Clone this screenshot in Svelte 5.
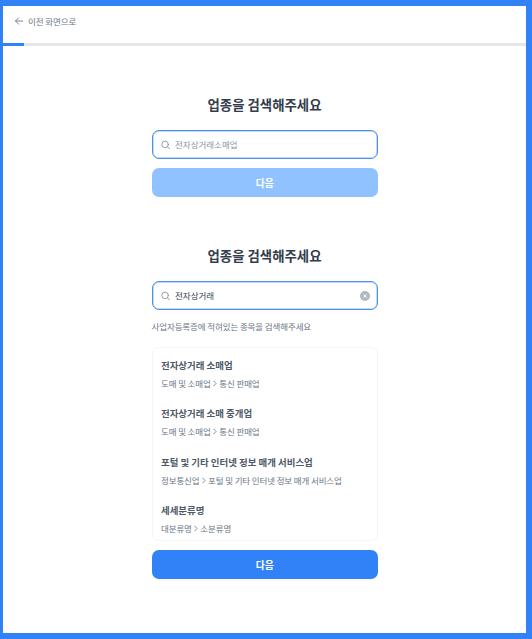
<script>
  const results = [
    { name: '전자상거래 소매업', parent: '도매 및 소매업', child: '통신 판매업' },
    { name: '전자상거래 소매 중개업', parent: '도매 및 소매업', child: '통신 판매업' },
    { name: '포털 및 기타 인터넷 정보 매개 서비스업', parent: '정보통신업', child: '포털 및 기타 인터넷 정보 매개 서비스업' },
    { name: '세세분류명', parent: '대분류명', child: '소분류명' }
  ];
  const progress = 4;
</script>

{#snippet searchIcon()}
  <svg class="search" viewBox="0 0 10 10" aria-hidden="true">
    <circle cx="4.1" cy="4.4" r="3.3" />
    <path d="M6.5 6.8 8.5 8.8" />
  </svg>
{/snippet}

<div class="frame">
  <div class="page">
    <header>
      <svg class="back" viewBox="0 0 8 8" aria-hidden="true">
        <path d="M7.6 4H.7M3.7.8.5 4l3.2 3.2" />
      </svg>
      <span>이전 화면으로</span>
    </header>
    <div class="track"><div class="bar" style="width: {progress}%"></div></div>

    <main>
      <section>
        <h2>업종을 검색해주세요</h2>
        <div class="field">
          {@render searchIcon()}
          <span class="placeholder">전자상거래소매업</span>
        </div>
        <button class="disabled">다음</button>
      </section>

      <section class="second">
        <h2>업종을 검색해주세요</h2>
        <div class="field">
          {@render searchIcon()}
          <span class="value">전자상거래</span>
          <svg class="clear" viewBox="0 0 10 10" aria-hidden="true">
            <circle cx="5" cy="5" r="5" />
            <path d="m3.7 3.7 2.6 2.6m0-2.6-2.6 2.6" />
          </svg>
        </div>
        <p class="help">사업자등록증에 적혀있는 종목을 검색해주세요</p>
        <ul>
          {#each results as item}
            <li>
              <strong>{item.name}</strong>
              <div class="path">
                <span>{item.parent}</span>
                <svg viewBox="0 0 4 7" aria-hidden="true"><path d="m.7 1.1 2.3 2.4L.7 5.9" /></svg>
                <span>{item.child}</span>
              </div>
            </li>
          {/each}
        </ul>
        <button>다음</button>
      </section>
    </main>
  </div>
</div>

<style>
  :global(body) { margin: 0; }
  .frame {
    box-sizing: border-box;
    width: 532px;
    height: 639px;
    padding: 6px 6px 6px 3px;
    background: #3182f6;
    font-family: "Noto Sans CJK KR", sans-serif;
    white-space: nowrap;
  }
  .page { height: 627px; background: #fff; overflow: hidden; }
  header {
    box-sizing: border-box;
    display: flex;
    align-items: center;
    gap: 5px;
    height: 37px;
    padding: 0 0 7px 12px;
    color: #6b7684;
    font-size: 8.5px;
    letter-spacing: -0.1px;
  }
  header span { padding-bottom: 1px; }
  svg { display: block; flex: none; fill: none; stroke-linecap: round; stroke-linejoin: round; }
  .back { width: 8px; height: 8px; stroke: #6b7684; stroke-width: 0.9; }
  .track { height: 3px; background: #e5e8eb; }
  .bar { height: 3px; background: #3182f6; }
  main { width: 226.5px; margin-left: 148.5px; padding-top: 48px; }
  h2 {
    margin: 0 0 15px;
    padding: 0 0.5px 1px 0;
    text-align: center;
    color: #333d4b;
    font-size: 13.4px;
    line-height: 20px;
    font-weight: 700;
  }
  .field {
    box-sizing: border-box;
    display: flex;
    align-items: center;
    height: 29px;
    padding: 0 8px;
    border: 1px solid #4a90ec;
    border-radius: 7px;
    box-shadow: inset 0 0 0 0.5px #8bb8f2;
    font-size: 8.5px;
  }
  .field span { padding-bottom: 1px; }
  .search { width: 10px; height: 10px; margin-right: 4.5px; stroke: #8b95a1; stroke-width: 0.9; }
  .placeholder { color: #8b95a1; }
  .value { color: #333d4b; flex: 1; }
  .clear { width: 10px; height: 10px; margin-right: -0.5px; stroke: #fff; stroke-width: 1; }
  .clear circle { fill: #b0b8c1; stroke: none; }
  button {
    display: block;
    width: 100%;
    height: 29px;
    margin: 9px 0 0;
    padding: 0;
    border: 0;
    border-radius: 7px;
    background: #3182f6;
    color: #fff;
    font: 700 9.8px/28px "Noto Sans CJK KR", sans-serif;
  }
  .disabled { background: #90c2ff; }
  .second { padding-top: 48px; }
  .help { margin: 9px 0 14px; font-size: 8.5px; line-height: 14px; color: #6b7684; letter-spacing: -0.11px; }
  ul {
    box-sizing: border-box;
    height: 194px;
    margin: 0;
    padding: 10px 8px 0 8.5px;
    list-style: none;
    border: 1px solid #f4f5f7;
    border-radius: 7px;
  }
  li { height: 48.3px; }
  strong { display: block; font-size: 9.45px; line-height: 14px; font-weight: 700; color: #4e5968; }
  .path {
    display: flex;
    align-items: center;
    height: 14px;
    margin-top: 4px;
    gap: 2.3px;
    font-size: 8.5px;
    color: #6b7684;
    letter-spacing: -0.13px;
  }
  .path svg { width: 4px; height: 7px; margin-top: 1px; stroke: #6b7684; stroke-width: 0.8; }
</style>
